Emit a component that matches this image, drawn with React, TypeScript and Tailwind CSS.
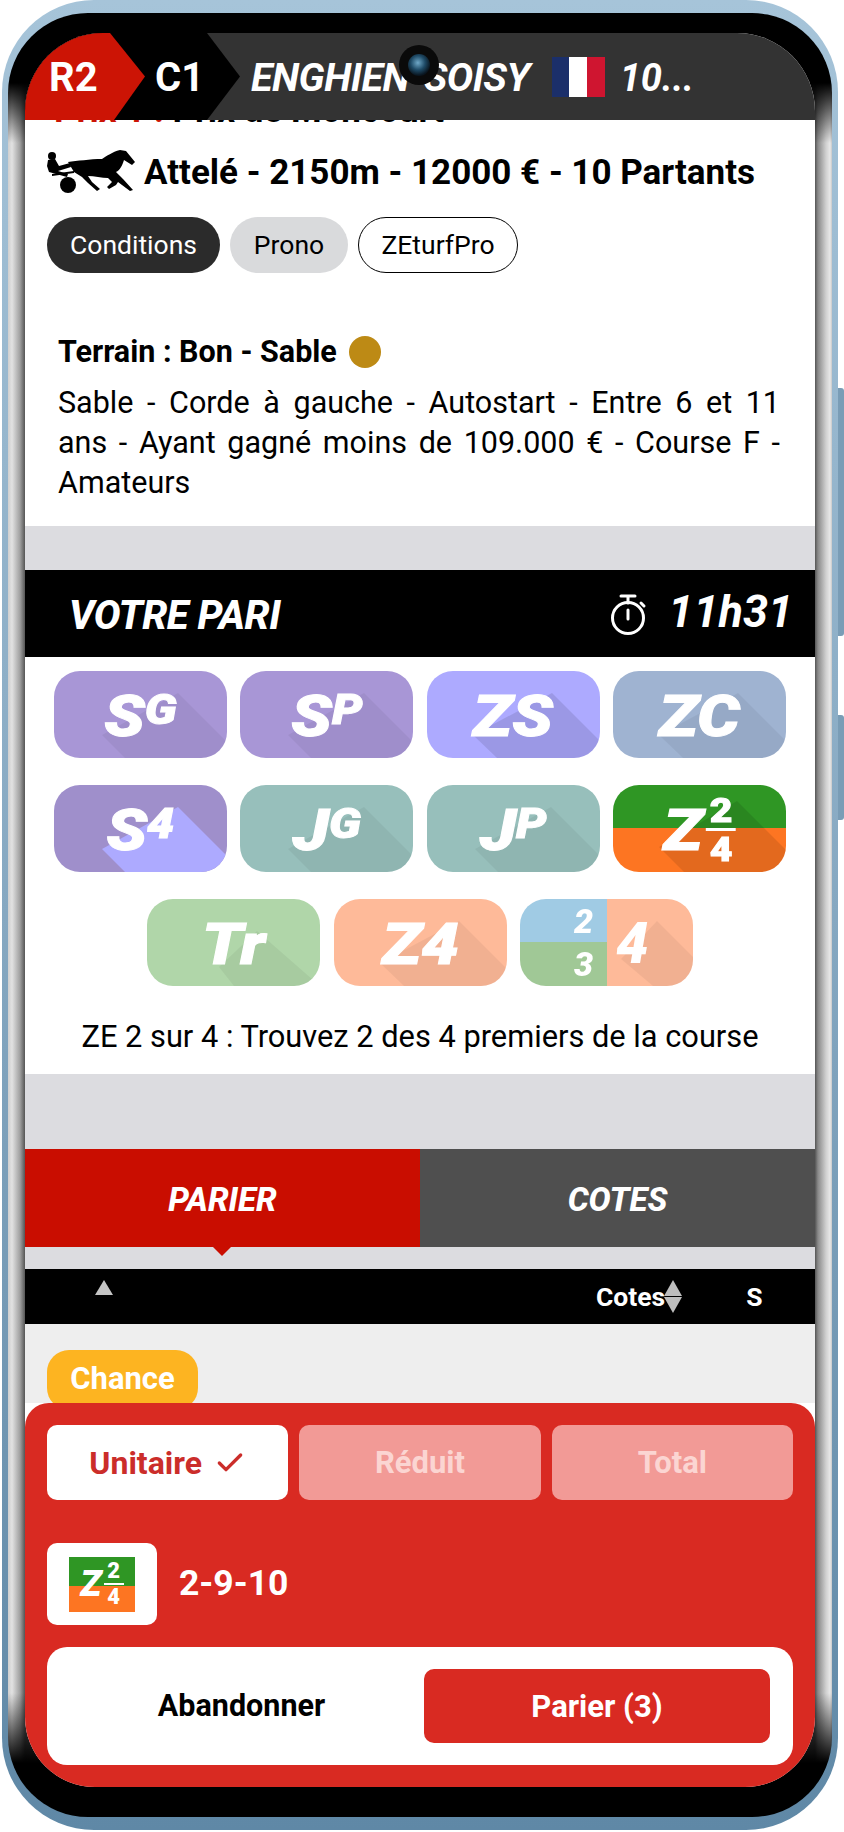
import React from "react";
import { Check } from "lucide-react";

type TileProps = {
  bg: string;
  shadow?: string;
  shade?: string;
  children: React.ReactNode;
};

// one bet button, the long diagonal shadow sits behind the letters
function Tile({ bg, shadow, shade = "fill-black/5", children }: TileProps) {
  return (
    <div className={`relative flex h-[87px] w-[173px] items-center justify-center overflow-hidden rounded-[26px] ${bg}`}>
      {shadow && (
        <svg viewBox="0 0 173 87" className="absolute inset-0 h-full w-full">
          <polygon points={shadow} className={shade} />
        </svg>
      )}
      <div className="relative flex scale-x-[1.15] items-start pt-[2px] font-black italic leading-none text-white blur-[0.5px] [-webkit-text-stroke:1px_white]">
        {children}
      </div>
    </div>
  );
}

const Big = ({ children }: { children: React.ReactNode }) => <span className="text-[58px] leading-[58px]">{children}</span>;
const Sup = ({ children }: { children: React.ReactNode }) => <span className="text-[42px] leading-[46px]">{children}</span>;

function Fraction({ small }: { small?: boolean }) {
  return (
    <div className={`flex flex-col items-center font-black not-italic leading-none ${small ? "text-[22px]" : "text-[34px]"}`}>
      <span>2</span>
      <span className={`bg-white ${small ? "my-[1px] h-[2px] w-[20px]" : "my-[1px] h-[3px] w-[26px]"}`} />
      <span>4</span>
    </div>
  );
}

function Stopwatch() {
  return (
    <svg viewBox="0 0 40 42" className="h-[42px] w-[40px]" fill="none" stroke="white" strokeWidth="3" strokeLinecap="round">
      <circle cx="20" cy="25" r="15.5" />
      <path d="M13 3h14M20 3v7M20 17v9M33 10l3 3" />
    </svg>
  );
}

function Horse() {
  return (
    <svg viewBox="13 14 92 50" className="mb-[6px] h-[50px] w-[92px] shrink-0" fill="black">
      <circle cx="20" cy="24" r="4" />
      <path d="M16 28l7-1 4 7 11-3 1 4-13 4 10 3-1 3-18-5-2-6z" />
      <circle cx="36" cy="53" r="8" />
      <path d="M36 30C45 29 58 27 70 27 75 24 80 20 88 18L94 19 103 30 100 33 92 28C90 34 88 38 84 40L91 47 101 58 98 59 86 50 84 53 77 57 75 55 80 50 76 46C70 46 62 44 56 44L60 50 68 57 65 59 56 51 50 45 42 40Z" />
      <path d="M20 42l22-3v2l-22 3z" />
    </svg>
  );
}

export default function App() {
  return (
    <div className="relative h-[1832px] w-[844px] overflow-hidden bg-white font-['Roboto',sans-serif]">
      {/* side buttons */}
      <div className="absolute right-0 top-[388px] h-[248px] w-[8px] rounded-r-[3px] bg-[#7a9db6]" />
      <div className="absolute right-0 top-[715px] h-[105px] w-[8px] rounded-r-[3px] bg-[#7a9db6]" />

      {/* phone body */}
      <div className="relative ml-[2px] h-[1830px] w-[836px] rounded-[92px] bg-gradient-to-b from-[#a6c4d9] via-[#86a8c1] to-[#5f88a6] px-[6px] py-[13px]">
        <div className="h-full w-full rounded-[80px] bg-[linear-gradient(180deg,#000_0,#000_70px,transparent_130px,transparent_1680px,#000_1750px),linear-gradient(90deg,#cfcfcf_0,#e2e2e2_4px,#a0a0a0_12px,#555_17px,#555_807px,#8a8a8a_810px,#d0d0d0_818px,#e8e8e8_822px,#c8c8c8_824px)] px-[17px] pb-[30px] pt-[20px]">
          <div className="flex h-full w-full flex-col overflow-hidden rounded-t-[78px] rounded-b-[70px] bg-white">
            {/* race header */}
            <div className="relative z-10 flex h-[87px] shrink-0 items-center bg-[#333333] text-white">
              <div className="relative z-10 flex h-full w-[120px] items-center bg-[#cc1405] pl-[24px] pt-[2px] text-[40px] font-bold [clip-path:polygon(0_0,85px_0,120px_50%,89px_100%,0_100%)]">
                R2
              </div>
              <div className="-ml-[120px] flex h-full w-[215px] items-center bg-black pl-[130px] pt-[2px] text-[40px] font-bold [clip-path:polygon(0_0,182px_0,215px_50%,182px_100%,0_100%)]">
                C1
              </div>
              <div className="ml-[11px] whitespace-nowrap pt-[3px] text-[39.5px] font-bold italic tracking-[-0.5px]">ENGHIEN-SOISY</div>
              <div className="ml-[22px] flex h-[40px] w-[53px] shrink-0">
                <div className="flex-1 bg-[#1b2f6a]" />
                <div className="flex-1 bg-white" />
                <div className="flex-1 bg-[#cf1530]" />
              </div>
              <div className="ml-[15px] pt-[3px] text-[38px] font-bold italic">10...</div>
            </div>

            {/* title, scrolled under the header */}
            <div className="flex h-[8px] shrink-0 items-end overflow-hidden pl-[29px] text-[35px] font-bold leading-none text-black">
              <span className="whitespace-nowrap">
                <span className="text-[#cc1405]">Prix 1 :</span> Prix de Moncourt
              </span>
            </div>

            <div className="flex h-[89px] shrink-0 items-center pl-[20px] pt-[2px]">
              <Horse />
              <span className="ml-[7px] whitespace-nowrap text-[35px] font-bold text-black">Attelé - 2150m - 12000 € - 10 Partants</span>
            </div>

            <div className="flex shrink-0 gap-[10px] pl-[22px] text-[26.5px] leading-none">
              <div className="flex h-[56px] w-[173px] items-center justify-center rounded-[28px] bg-[#2b2b2b] text-white">Conditions</div>
              <div className="flex h-[56px] w-[118px] items-center justify-center rounded-[28px] bg-[#d9dadc] text-black">Prono</div>
              <div className="flex h-[56px] w-[160px] items-center justify-center rounded-[28px] border border-black bg-white text-black">ZEturfPro</div>
            </div>

            <div className="h-[253px] shrink-0 pl-[33px] pr-[35px] pt-[60px] text-black">
              <div className="flex h-[38px] items-center gap-[12px] text-[30.5px] font-bold leading-none">
                Terrain : Bon - Sable
                <span className="h-[32px] w-[32px] rounded-full bg-[#bd8a15]" />
              </div>
              <p className="mt-[12px] text-justify text-[30.5px] leading-[40px] [word-spacing:3px]">
                Sable - Corde à gauche - Autostart - Entre 6 et 11 ans - Ayant gagné moins de 109.000 € - Course F - Amateurs
              </p>
            </div>

            <div className="h-[44px] shrink-0 bg-[#dcdce0]" />

            {/* votre pari */}
            <div className="flex h-[87px] shrink-0 items-center justify-between bg-black pl-[44px] pr-[22px] text-white">
              <span className="pt-[4px] text-[40px] font-extrabold italic tracking-[-0.5px]">VOTRE PARI</span>
              <div className="flex items-center gap-[20px]">
                <Stopwatch />
                <span className="pb-[4px] text-[45px] font-bold italic leading-none">11h31</span>
              </div>
            </div>

            <div className="flex h-[417px] shrink-0 flex-col items-center bg-white pt-[14px]">
              <div className="flex flex-col items-center gap-[27px]">
                <div className="flex gap-[13.5px]">
                  <Tile bg="bg-[#a896d6]" shadow="124,22 173,71 173,87 71,87 48,64">
                    <Big>S</Big>
                    <Sup>G</Sup>
                  </Tile>
                  <Tile bg="bg-[#a896d6]" shadow="124,22 173,71 173,87 71,87 48,64">
                    <Big>S</Big>
                    <Sup>P</Sup>
                  </Tile>
                  <Tile bg="bg-[#adaaff]" shadow="125,22 173,70 173,87 70,87 46,64" shade="fill-black/10">
                    <Big>ZS</Big>
                  </Tile>
                  <Tile bg="bg-[#9fb3d1]" shadow="125,22 173,70 173,87 70,87 46,64">
                    <Big>ZC</Big>
                  </Tile>
                </div>
                <div className="flex gap-[13.5px]">
                  <Tile bg="bg-[#9f8fcb]" shadow="124,22 173,71 173,87 71,87 48,64" shade="fill-[#adaaff]">
                    <Big>S</Big>
                    <Sup>4</Sup>
                  </Tile>
                  <Tile bg="bg-[#97bfbb]" shadow="124,22 173,71 173,87 71,87 48,64">
                    <Big>J</Big>
                    <Sup>G</Sup>
                  </Tile>
                  <Tile bg="bg-[#97bfbb]" shadow="124,22 173,71 173,87 71,87 48,64">
                    <Big>J</Big>
                    <Sup>P</Sup>
                  </Tile>
                  <Tile bg="bg-[linear-gradient(180deg,#2f9624_50%,#fd7522_50%)]" shadow="124,16 173,65 173,87 71,87 46,62" shade="fill-black/10">
                    <div className="flex items-center gap-[3px]">
                      <Big>Z</Big>
                      <Fraction />
                    </div>
                  </Tile>
                </div>
                <div className="flex gap-[13.5px]">
                  <Tile bg="bg-[#b0d6a9]" shadow="110,32 173,87 87,87 72,68">
                    <Big>Tr</Big>
                  </Tile>
                  <Tile bg="bg-[#feba99]" shadow="125,22 173,70 173,87 70,87 46,64">
                    <Big>Z4</Big>
                  </Tile>
                  <div className="relative grid h-[87px] w-[173px] grid-cols-[87px_86px] overflow-hidden rounded-[26px] font-black italic leading-none text-white">
                    <div className="flex flex-col text-[34px] blur-[0.5px]">
                      <div className="flex h-[43px] items-center justify-end bg-[#a0cbe4] pr-[14px]">2</div>
                      <div className="flex h-[44px] items-center justify-end bg-[#a0c896] pr-[14px]">3</div>
                    </div>
                    <div className="relative flex items-center bg-[#feba99] pl-[9px] text-[58px]">
                      <svg viewBox="0 0 86 87" className="absolute inset-0 h-full w-full">
                        <polygon points="50,22 86,58 86,87 46,87 14,60" className="fill-black/5" />
                      </svg>
                      <span className="relative blur-[0.5px]">4</span>
                    </div>
                  </div>
                </div>
              </div>
              <p className="mt-[37px] text-[30.8px] leading-[28px] text-black">ZE 2 sur 4 : Trouvez 2 des 4 premiers de la course</p>
            </div>

            <div className="h-[75px] shrink-0 bg-[#dcdce0]" />

            {/* tabs */}
            <div className="relative grid h-[98px] shrink-0 grid-cols-2 text-[33px] font-extrabold italic text-white">
              <div className="flex items-center justify-center bg-[#c90d00] pt-[4px]">PARIER</div>
              <div className="flex items-center justify-center bg-[#4f4f4f] pt-[4px]">COTES</div>
              <div className="absolute left-[188px] top-full h-0 w-0 border-x-[9px] border-t-[9px] border-x-transparent border-t-[#c90d00]" />
            </div>

            <div className="h-[22px] shrink-0 bg-[#dcdce0]" />

            {/* sort bar */}
            <div className="relative flex h-[55px] shrink-0 items-center bg-black text-[26.5px] font-bold text-white">
              <div className="absolute left-[70px] top-[11px] h-0 w-0 border-x-[9px] border-b-[15px] border-x-transparent border-b-[#c4c4c4]" />
              <span className="ml-[571px]">Cotes</span>
              <div className="-ml-[1px] flex flex-col gap-[1px]">
                <div className="h-0 w-0 border-x-[9px] border-b-[16px] border-x-transparent border-b-[#bdbdbd]" />
                <div className="h-0 w-0 border-x-[9px] border-t-[16px] border-x-transparent border-t-[#bdbdbd]" />
              </div>
              <span className="ml-[64px]">S</span>
            </div>

            <div className="h-[79px] shrink-0 bg-[#eeeeee] pl-[22px] pt-[26px]">
              <div className="flex h-[60px] w-[151px] items-center justify-center rounded-[22px] bg-[#fdb421] pb-[4px] text-[31px] font-bold leading-none text-white">
                Chance
              </div>
            </div>

            {/* bet slip */}
            <div className="relative min-h-0 flex-1 rounded-t-[24px] bg-[#d92a22] px-[22px] pt-[22px]">
              <div className="grid grid-cols-3 gap-[11px] text-[31px] font-bold leading-none">
                <div className="flex h-[75px] items-center justify-center gap-[12px] rounded-[10px] bg-white text-[#cb2d2a]">
                  <span className="text-[32px]">Unitaire</span>
                  <Check size={32} strokeWidth={2.5} />
                </div>
                <div className="flex h-[75px] items-center justify-center rounded-[10px] bg-[#f29a96] text-[#fbd5d2]">Réduit</div>
                <div className="flex h-[75px] items-center justify-center rounded-[10px] bg-[#f29a96] text-[#fbd5d2]">Total</div>
              </div>

              <div className="mt-[43px] flex items-center gap-[22px]">
                <div className="flex h-[82px] w-[110px] items-center justify-center rounded-[10px] bg-white">
                  <div className="flex h-[55px] w-[66px] items-center justify-center gap-[2px] bg-[linear-gradient(180deg,#2f9624_52%,#fd7522_52%)] font-black italic leading-none text-white">
                    <span className="text-[36px]">Z</span>
                    <Fraction small />
                  </div>
                </div>
                <span className="text-[35.5px] font-bold leading-none text-white">2-9-10</span>
              </div>

              <div className="mt-[22px] flex h-[118px] items-center rounded-[20px] bg-white pl-[12px] pr-[23px] text-[30.5px] font-bold leading-none">
                <div className="flex-1 text-center text-black">Abandonner</div>
                <div className="flex h-[74px] w-[346px] items-center justify-center rounded-[10px] bg-[#d92a22] text-[31px] text-white">Parier (3)</div>
              </div>
            </div>
          </div>
        </div>
      </div>

      {/* front camera, sits over the header title */}
      <div className="absolute left-[399px] top-[45px] z-20 flex h-[40px] w-[40px] items-center justify-center rounded-full bg-[#0a0a0a]">
        <div className="h-[22px] w-[22px] rounded-full bg-[radial-gradient(circle_at_45%_40%,#6fa8c8_0,#1e4a66_40%,#0a1620_70%,#050a10_100%)]" />
      </div>
    </div>
  );
}
